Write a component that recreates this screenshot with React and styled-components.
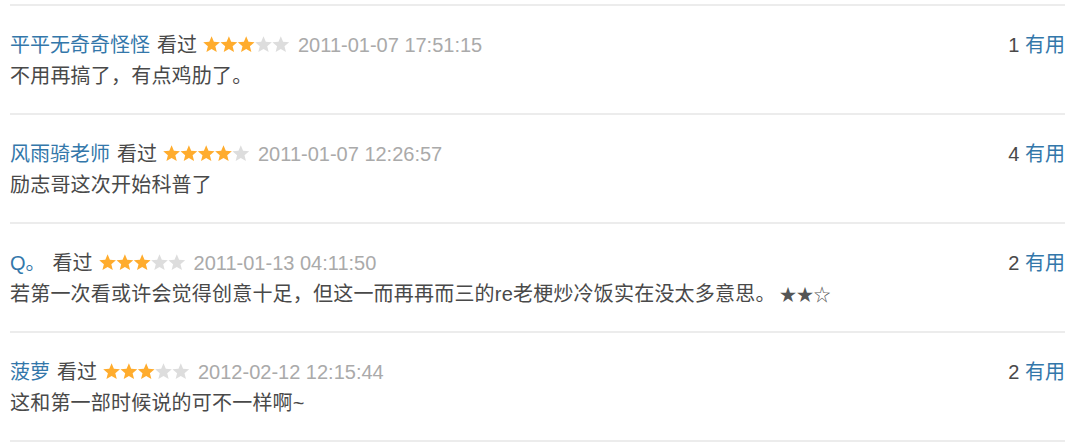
import React from "react";
import styled, { createGlobalStyle } from "styled-components";

const Global = createGlobalStyle`
  html, body { margin: 0; padding: 0; background: #fff; }
  body { font-family: "Liberation Sans", Arial, "Noto Sans CJK SC", sans-serif; }
`;

const List = styled.div`
  margin: 4px 6px 0 10px;
  border-top: 2px solid #ececec;
`;

const Item = styled.div`
  padding: 24px 0 22px;
  border-bottom: 2px solid #ececec;
`;

const Header = styled.div`
  display: flex;
  align-items: center;
  justify-content: space-between;
  height: 30px;
  font-size: 20px;
  line-height: 30px;
`;

const Info = styled.div`
  display: flex;
  align-items: center;
  white-space: pre;
`;

const Name = styled.a`
  color: #3377aa;
  text-decoration: none;
  margin-right: 7px;
`;

const Watched = styled.span`
  color: #494949;
`;

const StarWrap = styled.span`
  display: inline-flex;
  margin: 0 8px 0 6px;
`;

const Time = styled.span`
  color: #aaaaaa;
`;

const Votes = styled.div`
  color: #494949;
  white-space: pre;
`;

const Useful = styled.a`
  color: #3377aa;
  text-decoration: none;
`;

const Content = styled.p`
  margin: 1px 0 0;
  height: 30px;
  font-size: 20px;
  line-height: 30px;
  color: #494949;
  white-space: nowrap;
  letter-spacing: 0.2px;
`;

const Glyphs = styled.span`
  font-family: "Noto Sans CJK SC", sans-serif;
  font-size: 17px;
  line-height: 1;
  color: #555;
  margin-left: 4px;
  letter-spacing: 0;
`;

const starPoints = (() => {
  const cx = 8.6, cy = 9, R = 8.8, r = 3.9;
  const pts = [];
  for (let k = 0; k < 10; k++) {
    const a = (-90 + k * 36) * Math.PI / 180;
    const rad = k % 2 === 0 ? R : r;
    pts.push(`${(cx + rad * Math.cos(a)).toFixed(2)},${(cy + rad * Math.sin(a)).toFixed(2)}`);
  }
  return pts.join(" ");
})();

function Stars({ n }) {
  return (
    <StarWrap>
      <svg width="87" height="18" viewBox="0 0 87 18">
        {[0, 1, 2, 3, 4].map((i) => (
          <polygon
            key={i}
            points={starPoints}
            transform={`translate(${i * 17.3} 0)`}
            fill={i < n ? "#ffac2d" : "#dddddd"}
          />
        ))}
      </svg>
    </StarWrap>
  );
}

const data = [
  { name: "平平无奇奇怪怪", stars: 3, time: "2011-01-07 17:51:15", votes: 1, text: "不用再搞了，有点鸡肋了。" },
  { name: "风雨骑老师", stars: 4, time: "2011-01-07 12:26:57", votes: 4, text: "励志哥这次开始科普了" },
  { name: "Q。", stars: 3, time: "2011-01-13 04:11:50", votes: 2, text: "若第一次看或许会觉得创意十足，但这一而再再而三的re老梗炒冷饭实在没太多意思。", extra: "★★☆" },
  { name: "菠萝", stars: 3, time: "2012-02-12 12:15:44", votes: 2, text: "这和第一部时候说的可不一样啊~" },
];

export default function App() {
  return (
    <>
      <Global />
      <List>
        {data.map((d) => (
          <Item key={d.time}>
            <Header>
              <Info>
                <Name>{d.name}</Name>
                <Watched>看过</Watched>
                <Stars n={d.stars} />
                <Time>{d.time}</Time>
              </Info>
              <Votes>
                {d.votes} <Useful>有用</Useful>
              </Votes>
            </Header>
            <Content>
              {d.text}
              {d.extra && <Glyphs>{d.extra}</Glyphs>}
            </Content>
          </Item>
        ))}
      </List>
    </>
  );
}
